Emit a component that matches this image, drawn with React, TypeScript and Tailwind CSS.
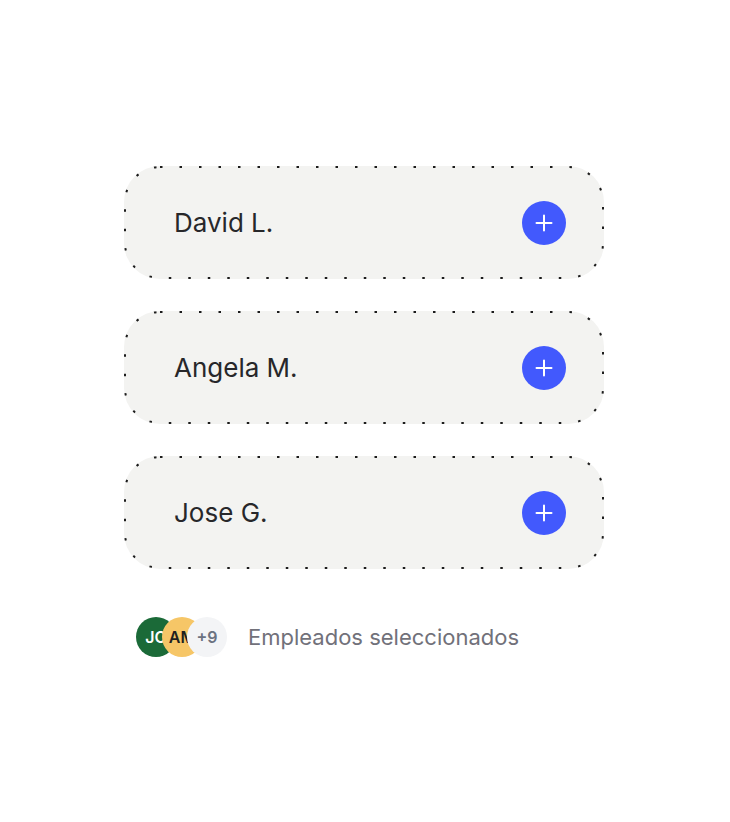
import React from "react";

const names = ["David L.", "Angela M.", "Jose G."];

function Card({ name }: { name: string }) {
  return (
    <div className="relative flex h-[113px] w-[480px] items-center justify-between rounded-[36px] bg-[#f3f3f1] pl-[50px] pr-[38px]">
      <svg className="pointer-events-none absolute inset-0" width="480" height="113" viewBox="0 0 480 113" fill="none">
        <rect x="1" y="1" width="478" height="111" rx="35" stroke="#1c1c1c" strokeWidth="2" strokeDasharray="2.5 17" />
      </svg>
      <span className="text-[26px] font-normal text-[#27272a]">{name}</span>
      <button className="flex h-[44px] w-[44px] items-center justify-center rounded-full bg-[#4259fd]">
        <svg width="20" height="20" viewBox="0 0 20 20" fill="none">
          <path d="M10 2.5v15M2.5 10h15" stroke="white" strokeWidth="2" strokeLinecap="round" />
        </svg>
      </button>
    </div>
  );
}

export default function App() {
  return (
    <div className="min-h-[822px] w-full bg-white pt-[166px] pl-[124px]" style={{ fontFamily: "Inter, 'Noto Sans', sans-serif" }}>
      <div className="flex flex-col gap-[32px]">
        {names.map((n) => (
          <Card key={n} name={n} />
        ))}
      </div>
      <div className="mt-[48px] flex items-center pl-[12px]">
        <div className="flex">
          <div className="relative z-10 flex h-[40px] w-[40px] items-center justify-center overflow-hidden rounded-full bg-[#1b6a38] text-[16px] font-semibold text-white">
            JO
          </div>
          <div className="relative z-20 -ml-[14px] flex h-[40px] w-[40px] items-center justify-center overflow-hidden rounded-full bg-[#f6c667] text-[16px] font-semibold text-[#1f1f1f]">
            AM
          </div>
          <div className="relative z-30 -ml-[15px] flex h-[40px] w-[40px] items-center justify-center rounded-full bg-[#f3f4f6] text-[16px] font-semibold text-[#6b7280]">
            +9
          </div>
        </div>
        <span className="ml-[21px] text-[22px] text-[#71717a]">Empleados seleccionados</span>
      </div>
    </div>
  );
}
